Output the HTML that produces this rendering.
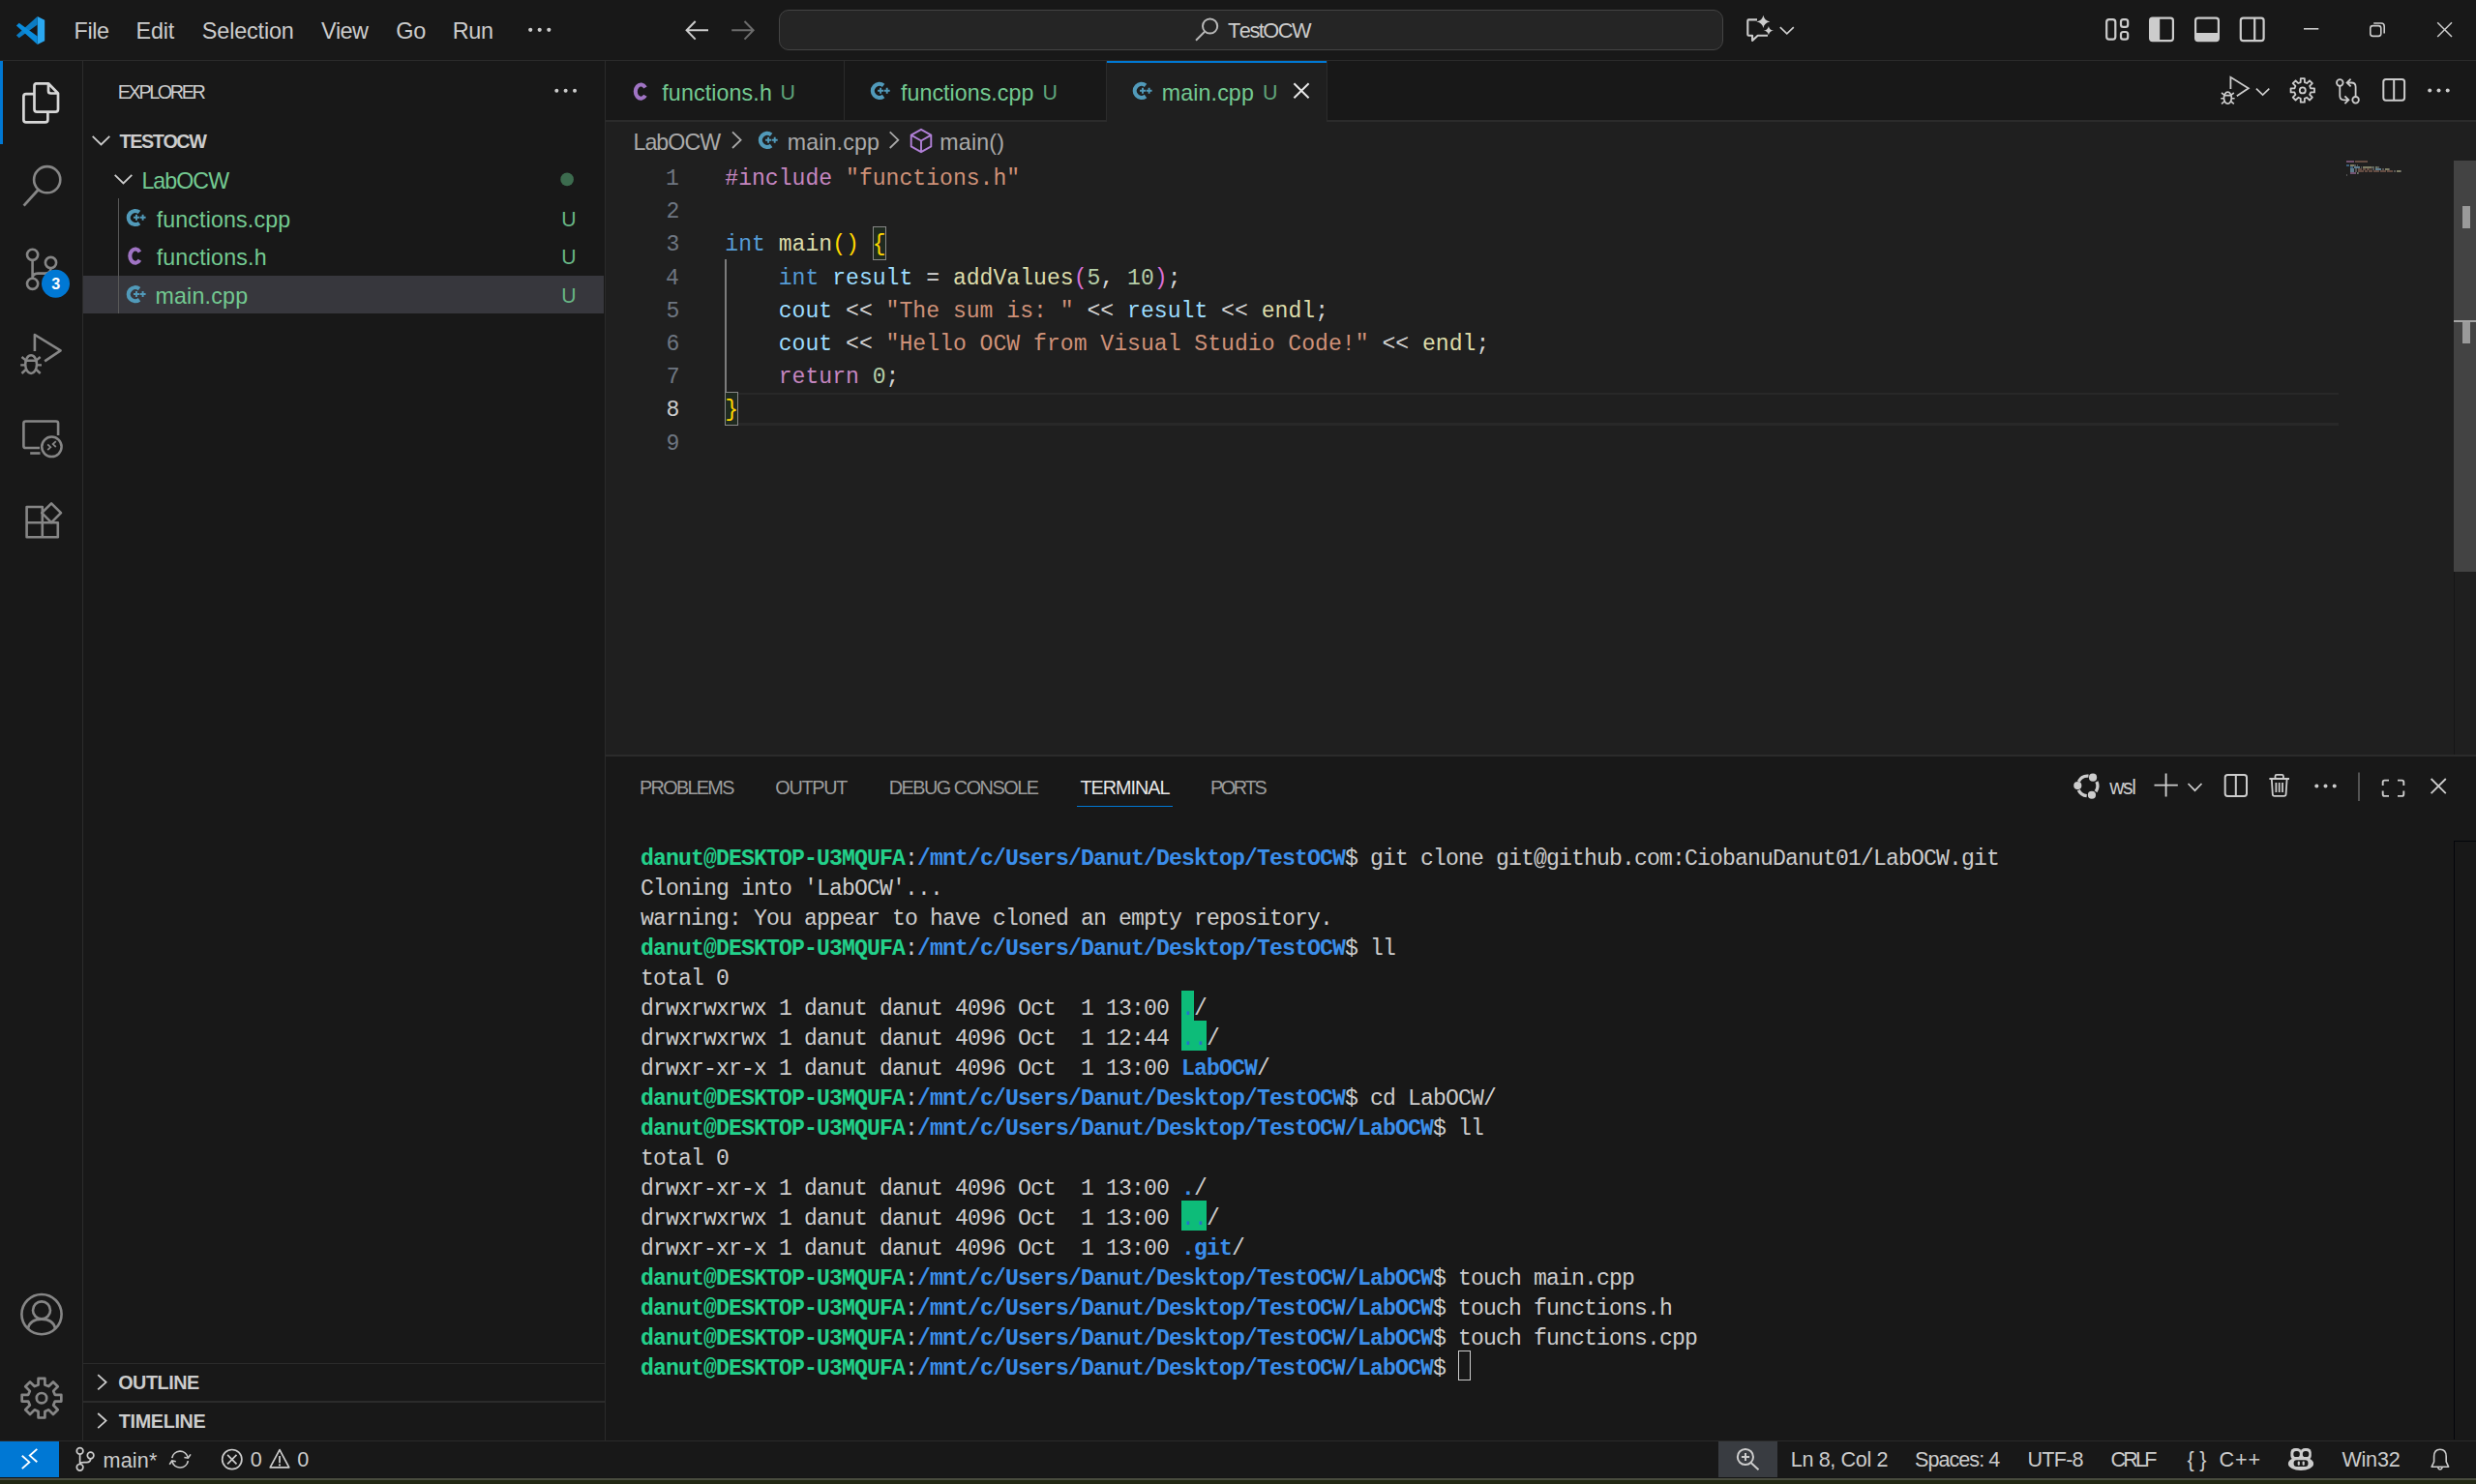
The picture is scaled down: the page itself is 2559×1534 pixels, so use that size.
<!DOCTYPE html>
<html><head><meta charset="utf-8"><title>main.cpp - TestOCW - Visual Studio Code</title>
<style>
html,body{margin:0;padding:0;}
body{width:2559px;height:1534px;background:#181818;overflow:hidden;position:relative;font-family:"Liberation Sans",sans-serif;font-kerning:none;font-variant-ligatures:none;}
.b{position:absolute;}
.t{position:absolute;white-space:pre;line-height:1;z-index:2;}
.m{font-family:"Liberation Mono",monospace;font-size:23.1px;}
.tm{font-family:"Liberation Mono",monospace;font-size:23.1px;letter-spacing:-0.860px;}
svg.ic{position:absolute;left:0;top:0;z-index:1;}
</style></head><body>
<div class="b" style="left:626px;top:63px;width:1933px;height:719px;background:#1f1f1f;"></div>
<div class="b" style="left:626px;top:63px;width:1933px;height:61px;background:#181818;"></div>
<div class="b" style="left:626px;top:124px;width:1933px;height:2px;background:#2b2b2b;"></div>
<div class="b" style="left:872px;top:63px;width:1px;height:61px;background:#2b2b2b;"></div>
<div class="b" style="left:1143px;top:63px;width:1px;height:61px;background:#2b2b2b;"></div>
<div class="b" style="left:1144px;top:63px;width:227px;height:63px;background:#1f1f1f;"></div>
<div class="b" style="left:1144px;top:63px;width:227px;height:2px;background:#0078d4;"></div>
<div class="b" style="left:1371px;top:63px;width:1px;height:61px;background:#2b2b2b;"></div>
<div class="b" style="left:0px;top:61.5px;width:2559px;height:1.5px;background:#2b2b2b;"></div>
<div class="b" style="left:85px;top:63px;width:1.3px;height:1426px;background:#2b2b2b;"></div>
<div class="b" style="left:625px;top:63px;width:1.3px;height:1426px;background:#2b2b2b;"></div>
<div class="b" style="left:0px;top:63px;width:3px;height:86.4px;background:#0078d4;"></div>
<div class="b" style="left:86.3px;top:285px;width:537.7px;height:39px;background:#37373d;"></div>
<div class="b" style="left:121.5px;top:205.2px;width:1.5px;height:118.8px;background:#585858;"></div>
<div class="b" style="left:86.4px;top:1408.6px;width:538.6px;height:1.5px;background:#2b2b2b;"></div>
<div class="b" style="left:86.4px;top:1448.2px;width:538.6px;height:1.5px;background:#2b2b2b;"></div>
<div class="b" style="left:626.4px;top:780.4px;width:1932.6px;height:709px;background:#181818;"></div>
<div class="b" style="left:626.4px;top:780.4px;width:1932.6px;height:1.6px;background:#2b2b2b;"></div>
<div class="b" style="left:1113px;top:832.6px;width:98.8px;height:1.8px;background:#0078d4;"></div>
<div class="b" style="left:0px;top:1488.7px;width:2559px;height:1.3px;background:#2b2b2b;"></div>
<div class="b" style="left:0px;top:1490px;width:2559px;height:38px;background:#181818;"></div>
<div class="b" style="left:0px;top:1490px;width:61.1px;height:38px;background:#0078d4;"></div>
<div class="b" style="left:1776px;top:1490px;width:61px;height:38px;background:#393c41;"></div>
<div class="b" style="left:0px;top:1527px;width:2559px;height:1px;background:#151515;"></div>
<div class="b" style="left:0px;top:1528px;width:2559px;height:2px;background:#484b3e;"></div>
<div class="b" style="left:0px;top:1530px;width:2559px;height:4px;background:#212814;"></div>
<div class="b" style="left:2536px;top:166px;width:23px;height:425px;background:#434343;"></div>
<div class="b" style="left:2536px;top:591px;width:1px;height:189.4px;background:#151517;"></div>
<div class="b" style="left:2545px;top:212.5px;width:8px;height:23px;background:#9a9a9a;"></div>
<div class="b" style="left:2545px;top:333px;width:8px;height:22px;background:#9a9a9a;"></div>
<div class="b" style="left:2536px;top:331px;width:23px;height:2px;background:#a4a4a4;"></div>
<div class="b" style="left:2536px;top:869px;width:23px;height:1px;background:#03050a;"></div>
<div class="b" style="left:2536px;top:869px;width:1px;height:619.4px;background:#03050a;"></div>
<div class="b" style="left:763px;top:405.5px;width:1654px;height:2.3px;background:#282828;"></div>
<div class="b" style="left:763px;top:437px;width:1654px;height:2.6px;background:#282828;"></div>
<div class="b" style="left:749px;top:405px;width:14px;height:35px;background:#1f2a1f;border:1px solid #888;box-sizing:border-box;"></div>
<div class="b" style="left:902px;top:234px;width:14px;height:35px;background:#1f2a1f;border:1px solid #888;box-sizing:border-box;"></div>
<div class="b" style="left:749.2px;top:268.2px;width:1.9px;height:136.8px;background:#7c7c7c;"></div>
<div class="t" style="left:76.58px;top:21.00px;font-size:23.4px;color:#cccccc;letter-spacing:-0.449px;">File</div>
<div class="t" style="left:140.48px;top:21.00px;font-size:23.4px;color:#cccccc;letter-spacing:-0.177px;">Edit</div>
<div class="t" style="left:208.84px;top:21.00px;font-size:23.4px;color:#cccccc;letter-spacing:-0.147px;">Selection</div>
<div class="t" style="left:332.00px;top:21.00px;font-size:23.4px;color:#cccccc;letter-spacing:-0.591px;">View</div>
<div class="t" style="left:409.22px;top:21.00px;font-size:23.4px;color:#cccccc;letter-spacing:-0.056px;">Go</div>
<div class="t" style="left:467.68px;top:21.00px;font-size:23.4px;color:#cccccc;letter-spacing:-0.344px;">Run</div>
<div class="t" style="left:1269.01px;top:21.00px;font-size:21.8px;color:#cccccc;letter-spacing:-1.518px;">TestOCW</div>
<div class="t" style="left:121.78px;top:86.00px;font-size:19.8px;color:#cccccc;letter-spacing:-2.385px;">EXPLORER</div>
<div class="t" style="left:123.48px;top:137.00px;font-size:19.8px;color:#cccccc;font-weight:700;letter-spacing:-1.408px;">TESTOCW</div>
<div class="t" style="left:146.40px;top:176.00px;font-size:23.2px;color:#73c991;letter-spacing:-0.945px;">LabOCW</div>
<div class="t" style="left:161.67px;top:216.00px;font-size:23.2px;color:#73c991;letter-spacing:0.150px;">functions.cpp</div>
<div class="t" style="left:161.67px;top:255.00px;font-size:23.2px;color:#73c991;letter-spacing:0.173px;">functions.h</div>
<div class="t" style="left:160.46px;top:295.00px;font-size:23.2px;color:#73c991;letter-spacing:0.225px;">main.cpp</div>
<div class="t" style="left:580.26px;top:216.00px;font-size:21.2px;color:#68b585;">U</div>
<div class="t" style="left:580.26px;top:255.00px;font-size:21.2px;color:#68b585;">U</div>
<div class="t" style="left:580.26px;top:295.00px;font-size:21.2px;color:#68b585;">U</div>
<div class="t" style="left:122.19px;top:1420.00px;font-size:19.8px;color:#cccccc;font-weight:700;letter-spacing:-0.468px;">OUTLINE</div>
<div class="t" style="left:122.78px;top:1460.00px;font-size:19.8px;color:#cccccc;font-weight:700;letter-spacing:-0.343px;">TIMELINE</div>
<div class="t" style="left:684.27px;top:85.00px;font-size:23.2px;color:#73c991;letter-spacing:0.143px;">functions.h</div>
<div class="t" style="left:806.55px;top:86.00px;font-size:21.4px;color:#5fa37a;">U</div>
<div class="t" style="left:930.97px;top:85.00px;font-size:23.2px;color:#73c991;letter-spacing:0.058px;">functions.cpp</div>
<div class="t" style="left:1077.55px;top:86.00px;font-size:21.4px;color:#5fa37a;">U</div>
<div class="t" style="left:1200.66px;top:85.00px;font-size:23.2px;color:#73c991;letter-spacing:0.154px;">main.cpp</div>
<div class="t" style="left:1304.95px;top:86.00px;font-size:21.4px;color:#5fa37a;">U</div>
<div class="t" style="left:654.40px;top:136.00px;font-size:23.2px;color:#a9a9a9;letter-spacing:-0.905px;">LabOCW</div>
<div class="t" style="left:813.76px;top:136.00px;font-size:23.2px;color:#a9a9a9;letter-spacing:0.154px;">main.cpp</div>
<div class="t" style="left:971.36px;top:136.00px;font-size:23.2px;color:#a9a9a9;letter-spacing:0.168px;">main()</div>
<div class="t m" style="left:749.30px;top:174.00px;color:#c586c0">#include</div><div class="t m" style="left:874.04px;top:174.00px;color:#ce9178">&quot;functions.h&quot;</div>
<div class="t m" style="left:749.30px;top:242.00px;color:#569cd6">int</div><div class="t m" style="left:804.74px;top:242.00px;color:#dcdcaa">main</div><div class="t m" style="left:860.18px;top:242.00px;color:#ffd700">()</div><div class="t m" style="left:901.76px;top:242.00px;color:#ffd700">{</div>
<div class="t m" style="left:804.74px;top:277.00px;color:#569cd6">int</div><div class="t m" style="left:860.18px;top:277.00px;color:#9cdcfe">result</div><div class="t m" style="left:957.20px;top:277.00px;color:#d4d4d4">=</div><div class="t m" style="left:984.92px;top:277.00px;color:#dcdcaa">addValues</div><div class="t m" style="left:1109.66px;top:277.00px;color:#da70d6">(</div><div class="t m" style="left:1123.52px;top:277.00px;color:#b5cea8">5</div><div class="t m" style="left:1137.38px;top:277.00px;color:#d4d4d4">,</div><div class="t m" style="left:1165.10px;top:277.00px;color:#b5cea8">10</div><div class="t m" style="left:1192.82px;top:277.00px;color:#da70d6">)</div><div class="t m" style="left:1206.68px;top:277.00px;color:#d4d4d4">;</div>
<div class="t m" style="left:804.74px;top:311.00px;color:#9cdcfe">cout</div><div class="t m" style="left:874.04px;top:311.00px;color:#d4d4d4">&lt;&lt;</div><div class="t m" style="left:915.62px;top:311.00px;color:#ce9178">&quot;The sum is: &quot;</div><div class="t m" style="left:1123.52px;top:311.00px;color:#d4d4d4">&lt;&lt;</div><div class="t m" style="left:1165.10px;top:311.00px;color:#9cdcfe">result</div><div class="t m" style="left:1262.12px;top:311.00px;color:#d4d4d4">&lt;&lt;</div><div class="t m" style="left:1303.70px;top:311.00px;color:#dcdcaa">endl</div><div class="t m" style="left:1359.14px;top:311.00px;color:#d4d4d4">;</div>
<div class="t m" style="left:804.74px;top:345.00px;color:#9cdcfe">cout</div><div class="t m" style="left:874.04px;top:345.00px;color:#d4d4d4">&lt;&lt;</div><div class="t m" style="left:915.62px;top:345.00px;color:#ce9178">&quot;Hello OCW from Visual Studio Code!&quot;</div><div class="t m" style="left:1428.44px;top:345.00px;color:#d4d4d4">&lt;&lt;</div><div class="t m" style="left:1470.02px;top:345.00px;color:#dcdcaa">endl</div><div class="t m" style="left:1525.46px;top:345.00px;color:#d4d4d4">;</div>
<div class="t m" style="left:804.74px;top:379.00px;color:#c586c0">return</div><div class="t m" style="left:901.76px;top:379.00px;color:#b5cea8">0</div><div class="t m" style="left:915.62px;top:379.00px;color:#d4d4d4">;</div>
<div class="t m" style="left:749.30px;top:413.00px;color:#ffd700">}</div>
<div class="b" style="left:2424.90px;top:165.90px;width:8.08px;height:1.9px;background:#c586c0;opacity:0.5"></div>
<div class="b" style="left:2433.99px;top:165.90px;width:13.13px;height:1.9px;background:#ce9178;opacity:0.4"></div>
<div class="b" style="left:2424.90px;top:169.90px;width:3.03px;height:1.9px;background:#569cd6;opacity:0.5"></div>
<div class="b" style="left:2428.94px;top:169.90px;width:4.04px;height:1.9px;background:#dcdcaa;opacity:0.5"></div>
<div class="b" style="left:2432.98px;top:169.90px;width:2.02px;height:1.9px;background:#d4d4d4;opacity:0.3"></div>
<div class="b" style="left:2436.01px;top:169.90px;width:1.01px;height:1.9px;background:#d4d4d4;opacity:0.3"></div>
<div class="b" style="left:2428.94px;top:171.90px;width:3.03px;height:1.9px;background:#569cd6;opacity:0.5"></div>
<div class="b" style="left:2432.98px;top:171.90px;width:6.06px;height:1.9px;background:#9cdcfe;opacity:0.5"></div>
<div class="b" style="left:2440.05px;top:171.90px;width:1.01px;height:1.9px;background:#d4d4d4;opacity:0.3"></div>
<div class="b" style="left:2442.07px;top:171.90px;width:9.09px;height:1.9px;background:#dcdcaa;opacity:0.5"></div>
<div class="b" style="left:2451.16px;top:171.90px;width:1.01px;height:1.9px;background:#d4d4d4;opacity:0.3"></div>
<div class="b" style="left:2452.17px;top:171.90px;width:1.01px;height:1.9px;background:#b5cea8;opacity:0.5"></div>
<div class="b" style="left:2453.18px;top:171.90px;width:1.01px;height:1.9px;background:#d4d4d4;opacity:0.3"></div>
<div class="b" style="left:2455.20px;top:171.90px;width:2.02px;height:1.9px;background:#b5cea8;opacity:0.5"></div>
<div class="b" style="left:2457.22px;top:171.90px;width:1.01px;height:1.9px;background:#d4d4d4;opacity:0.3"></div>
<div class="b" style="left:2458.23px;top:171.90px;width:1.01px;height:1.9px;background:#d4d4d4;opacity:0.3"></div>
<div class="b" style="left:2428.94px;top:173.90px;width:4.04px;height:1.9px;background:#9cdcfe;opacity:0.5"></div>
<div class="b" style="left:2433.99px;top:173.90px;width:2.02px;height:1.9px;background:#d4d4d4;opacity:0.3"></div>
<div class="b" style="left:2437.02px;top:173.90px;width:4.04px;height:1.9px;background:#ce9178;opacity:0.4"></div>
<div class="b" style="left:2442.07px;top:173.90px;width:3.03px;height:1.9px;background:#ce9178;opacity:0.4"></div>
<div class="b" style="left:2446.11px;top:173.90px;width:3.03px;height:1.9px;background:#ce9178;opacity:0.4"></div>
<div class="b" style="left:2450.15px;top:173.90px;width:1.01px;height:1.9px;background:#ce9178;opacity:0.4"></div>
<div class="b" style="left:2452.17px;top:173.90px;width:2.02px;height:1.9px;background:#d4d4d4;opacity:0.3"></div>
<div class="b" style="left:2455.20px;top:173.90px;width:6.06px;height:1.9px;background:#9cdcfe;opacity:0.5"></div>
<div class="b" style="left:2462.27px;top:173.90px;width:2.02px;height:1.9px;background:#d4d4d4;opacity:0.3"></div>
<div class="b" style="left:2465.30px;top:173.90px;width:4.04px;height:1.9px;background:#dcdcaa;opacity:0.5"></div>
<div class="b" style="left:2469.34px;top:173.90px;width:1.01px;height:1.9px;background:#d4d4d4;opacity:0.3"></div>
<div class="b" style="left:2428.94px;top:175.90px;width:4.04px;height:1.9px;background:#9cdcfe;opacity:0.5"></div>
<div class="b" style="left:2433.99px;top:175.90px;width:2.02px;height:1.9px;background:#d4d4d4;opacity:0.3"></div>
<div class="b" style="left:2437.02px;top:175.90px;width:6.06px;height:1.9px;background:#ce9178;opacity:0.4"></div>
<div class="b" style="left:2444.09px;top:175.90px;width:3.03px;height:1.9px;background:#ce9178;opacity:0.4"></div>
<div class="b" style="left:2448.13px;top:175.90px;width:4.04px;height:1.9px;background:#ce9178;opacity:0.4"></div>
<div class="b" style="left:2453.18px;top:175.90px;width:6.06px;height:1.9px;background:#ce9178;opacity:0.4"></div>
<div class="b" style="left:2460.25px;top:175.90px;width:6.06px;height:1.9px;background:#ce9178;opacity:0.4"></div>
<div class="b" style="left:2467.32px;top:175.90px;width:6.06px;height:1.9px;background:#ce9178;opacity:0.4"></div>
<div class="b" style="left:2474.39px;top:175.90px;width:2.02px;height:1.9px;background:#d4d4d4;opacity:0.3"></div>
<div class="b" style="left:2477.42px;top:175.90px;width:4.04px;height:1.9px;background:#dcdcaa;opacity:0.5"></div>
<div class="b" style="left:2481.46px;top:175.90px;width:1.01px;height:1.9px;background:#d4d4d4;opacity:0.3"></div>
<div class="b" style="left:2428.94px;top:177.90px;width:6.06px;height:1.9px;background:#c586c0;opacity:0.5"></div>
<div class="b" style="left:2436.01px;top:177.90px;width:1.01px;height:1.9px;background:#b5cea8;opacity:0.5"></div>
<div class="b" style="left:2437.02px;top:177.90px;width:1.01px;height:1.9px;background:#d4d4d4;opacity:0.3"></div>
<div class="b" style="left:2424.90px;top:179.90px;width:1.01px;height:1.9px;background:#d4d4d4;opacity:0.3"></div>
<div class="t m" style="left:688.05px;top:174.00px;color:#6e7681">1</div>
<div class="t m" style="left:688.57px;top:208.00px;color:#6e7681">2</div>
<div class="t m" style="left:688.40px;top:242.00px;color:#6e7681">3</div>
<div class="t m" style="left:688.11px;top:277.00px;color:#6e7681">4</div>
<div class="t m" style="left:688.40px;top:311.00px;color:#6e7681">5</div>
<div class="t m" style="left:688.44px;top:345.00px;color:#6e7681">6</div>
<div class="t m" style="left:688.74px;top:379.00px;color:#6e7681">7</div>
<div class="t m" style="left:688.46px;top:413.00px;color:#cccccc">8</div>
<div class="t m" style="left:688.54px;top:448.00px;color:#6e7681">9</div>
<div class="t" style="left:660.98px;top:805.00px;font-size:19.8px;color:#9d9d9d;letter-spacing:-1.643px;">PROBLEMS</div>
<div class="t" style="left:801.36px;top:805.00px;font-size:19.8px;color:#9d9d9d;letter-spacing:-1.280px;">OUTPUT</div>
<div class="t" style="left:918.68px;top:805.00px;font-size:19.8px;color:#9d9d9d;letter-spacing:-1.447px;">DEBUG CONSOLE</div>
<div class="t" style="left:1116.46px;top:805.00px;font-size:19.8px;color:#e7e7e7;letter-spacing:-1.001px;">TERMINAL</div>
<div class="t" style="left:1250.98px;top:805.00px;font-size:19.8px;color:#9d9d9d;letter-spacing:-2.369px;">PORTS</div>
<div class="t" style="left:2180.33px;top:803.00px;font-size:21.2px;color:#cccccc;letter-spacing:-1.516px;">wsl</div>
<div class="t tm" style="left:662.00px;top:877.00px;color:#23d18b;font-weight:700;">danut@DESKTOP-U3MQUFA</div><div class="t tm" style="left:935.00px;top:877.00px;color:#cccccc;">:</div><div class="t tm" style="left:948.00px;top:877.00px;color:#3b8eea;font-weight:700;">/mnt/c/Users/Danut/Desktop/TestOCW</div><div class="t tm" style="left:1390.00px;top:877.00px;color:#cccccc;">$ git clone git@github.com:CiobanuDanut01/LabOCW.git</div>
<div class="t tm" style="left:662.00px;top:908.00px;color:#cccccc;">Cloning into &#x27;LabOCW&#x27;...</div>
<div class="t tm" style="left:662.00px;top:939.00px;color:#cccccc;">warning: You appear to have cloned an empty repository.</div>
<div class="t tm" style="left:662.00px;top:970.00px;color:#23d18b;font-weight:700;">danut@DESKTOP-U3MQUFA</div><div class="t tm" style="left:935.00px;top:970.00px;color:#cccccc;">:</div><div class="t tm" style="left:948.00px;top:970.00px;color:#3b8eea;font-weight:700;">/mnt/c/Users/Danut/Desktop/TestOCW</div><div class="t tm" style="left:1390.00px;top:970.00px;color:#cccccc;">$ ll</div>
<div class="t tm" style="left:662.00px;top:1001.00px;color:#cccccc;">total 0</div>
<div class="t tm" style="left:662.00px;top:1032.00px;color:#cccccc;">drwxrwxrwx 1 danut danut 4096 Oct  1 13:00 </div><div class="b" style="left:1221.00px;top:1024px;width:13.00px;height:31px;background:#0dbc79"></div><div class="t tm" style="left:1221.00px;top:1032.00px;color:#2472c8;">.</div><div class="t tm" style="left:1234.00px;top:1032.00px;color:#cccccc;">/</div>
<div class="t tm" style="left:662.00px;top:1063.00px;color:#cccccc;">drwxrwxrwx 1 danut danut 4096 Oct  1 12:44 </div><div class="b" style="left:1221.00px;top:1055px;width:26.00px;height:31px;background:#0dbc79"></div><div class="t tm" style="left:1221.00px;top:1063.00px;color:#2472c8;">..</div><div class="t tm" style="left:1247.00px;top:1063.00px;color:#cccccc;">/</div>
<div class="t tm" style="left:662.00px;top:1094.00px;color:#cccccc;">drwxr-xr-x 1 danut danut 4096 Oct  1 13:00 </div><div class="t tm" style="left:1221.00px;top:1094.00px;color:#3b8eea;font-weight:700;">LabOCW</div><div class="t tm" style="left:1299.00px;top:1094.00px;color:#cccccc;">/</div>
<div class="t tm" style="left:662.00px;top:1125.00px;color:#23d18b;font-weight:700;">danut@DESKTOP-U3MQUFA</div><div class="t tm" style="left:935.00px;top:1125.00px;color:#cccccc;">:</div><div class="t tm" style="left:948.00px;top:1125.00px;color:#3b8eea;font-weight:700;">/mnt/c/Users/Danut/Desktop/TestOCW</div><div class="t tm" style="left:1390.00px;top:1125.00px;color:#cccccc;">$ cd LabOCW/</div>
<div class="t tm" style="left:662.00px;top:1156.00px;color:#23d18b;font-weight:700;">danut@DESKTOP-U3MQUFA</div><div class="t tm" style="left:935.00px;top:1156.00px;color:#cccccc;">:</div><div class="t tm" style="left:948.00px;top:1156.00px;color:#3b8eea;font-weight:700;">/mnt/c/Users/Danut/Desktop/TestOCW/LabOCW</div><div class="t tm" style="left:1481.00px;top:1156.00px;color:#cccccc;">$ ll</div>
<div class="t tm" style="left:662.00px;top:1187.00px;color:#cccccc;">total 0</div>
<div class="t tm" style="left:662.00px;top:1218.00px;color:#cccccc;">drwxr-xr-x 1 danut danut 4096 Oct  1 13:00 </div><div class="t tm" style="left:1221.00px;top:1218.00px;color:#3b8eea;font-weight:700;">.</div><div class="t tm" style="left:1234.00px;top:1218.00px;color:#cccccc;">/</div>
<div class="t tm" style="left:662.00px;top:1249.00px;color:#cccccc;">drwxrwxrwx 1 danut danut 4096 Oct  1 13:00 </div><div class="b" style="left:1221.00px;top:1241px;width:26.00px;height:31px;background:#0dbc79"></div><div class="t tm" style="left:1221.00px;top:1249.00px;color:#2472c8;">..</div><div class="t tm" style="left:1247.00px;top:1249.00px;color:#cccccc;">/</div>
<div class="t tm" style="left:662.00px;top:1280.00px;color:#cccccc;">drwxr-xr-x 1 danut danut 4096 Oct  1 13:00 </div><div class="t tm" style="left:1221.00px;top:1280.00px;color:#3b8eea;font-weight:700;">.git</div><div class="t tm" style="left:1273.00px;top:1280.00px;color:#cccccc;">/</div>
<div class="t tm" style="left:662.00px;top:1311.00px;color:#23d18b;font-weight:700;">danut@DESKTOP-U3MQUFA</div><div class="t tm" style="left:935.00px;top:1311.00px;color:#cccccc;">:</div><div class="t tm" style="left:948.00px;top:1311.00px;color:#3b8eea;font-weight:700;">/mnt/c/Users/Danut/Desktop/TestOCW/LabOCW</div><div class="t tm" style="left:1481.00px;top:1311.00px;color:#cccccc;">$ touch main.cpp</div>
<div class="t tm" style="left:662.00px;top:1342.00px;color:#23d18b;font-weight:700;">danut@DESKTOP-U3MQUFA</div><div class="t tm" style="left:935.00px;top:1342.00px;color:#cccccc;">:</div><div class="t tm" style="left:948.00px;top:1342.00px;color:#3b8eea;font-weight:700;">/mnt/c/Users/Danut/Desktop/TestOCW/LabOCW</div><div class="t tm" style="left:1481.00px;top:1342.00px;color:#cccccc;">$ touch functions.h</div>
<div class="t tm" style="left:662.00px;top:1373.00px;color:#23d18b;font-weight:700;">danut@DESKTOP-U3MQUFA</div><div class="t tm" style="left:935.00px;top:1373.00px;color:#cccccc;">:</div><div class="t tm" style="left:948.00px;top:1373.00px;color:#3b8eea;font-weight:700;">/mnt/c/Users/Danut/Desktop/TestOCW/LabOCW</div><div class="t tm" style="left:1481.00px;top:1373.00px;color:#cccccc;">$ touch functions.cpp</div>
<div class="t tm" style="left:662.00px;top:1404.00px;color:#23d18b;font-weight:700;">danut@DESKTOP-U3MQUFA</div><div class="t tm" style="left:935.00px;top:1404.00px;color:#cccccc;">:</div><div class="t tm" style="left:948.00px;top:1404.00px;color:#3b8eea;font-weight:700;">/mnt/c/Users/Danut/Desktop/TestOCW/LabOCW</div><div class="t tm" style="left:1481.00px;top:1404.00px;color:#cccccc;">$ </div>
<div class="b" style="left:1507.0px;top:1396px;width:13.0px;height:31px;background:transparent;border:1.5px solid #cccccc;box-sizing:border-box;"></div>
<div class="t" style="left:53.33px;top:285.00px;font-size:16.2px;color:#ffffff;font-weight:700;">3</div>
<div class="t" style="left:106.57px;top:1499.00px;font-size:21.6px;color:#cccccc;letter-spacing:0.137px;">main*</div>
<div class="t" style="left:258.66px;top:1498.00px;font-size:21.6px;color:#cccccc;">0</div>
<div class="t" style="left:307.36px;top:1498.00px;font-size:21.6px;color:#cccccc;">0</div>
<div class="t" style="left:1850.83px;top:1498.00px;font-size:21.6px;color:#cccccc;letter-spacing:-0.381px;">Ln 8, Col 2</div>
<div class="t" style="left:1979.02px;top:1498.00px;font-size:21.6px;color:#cccccc;letter-spacing:-0.981px;">Spaces: 4</div>
<div class="t" style="left:2095.53px;top:1498.00px;font-size:21.6px;color:#cccccc;letter-spacing:-0.772px;">UTF-8</div>
<div class="t" style="left:2181.60px;top:1498.00px;font-size:21.6px;color:#cccccc;letter-spacing:-2.881px;">CRLF</div>
<div class="t" style="left:2260.44px;top:1498.00px;font-size:21.6px;color:#cccccc;letter-spacing:5.721px;">{}</div>
<div class="t" style="left:2293.60px;top:1498.00px;font-size:21.6px;color:#cccccc;letter-spacing:0.818px;">C++</div>
<div class="t" style="left:2420.41px;top:1498.00px;font-size:21.6px;color:#cccccc;letter-spacing:-0.236px;">Win32</div>
<svg class="ic" width="2559" height="1534" viewBox="0 0 2559 1534" fill="none" stroke-linecap="butt">
<polygon points="38.7,17 46.2,20.8 46.2,42.2 38.7,46" fill="#2aa7f0"/>
<polygon points="38.7,17 38.7,25.4 19.7,39.2 16.9,36.6" fill="#0b7cc4"/>
<polygon points="19.7,23.8 16.9,26.4 38.7,46 38.7,37.6" fill="#0a8cdc"/>
<circle cx="548.2" cy="30.8" r="2.1" fill="#cccccc"/>
<circle cx="557.7" cy="30.8" r="2.1" fill="#cccccc"/>
<circle cx="567.3" cy="30.8" r="2.1" fill="#cccccc"/>
<path d="M732,31.3 H710 M718.7,22 L709.6,31.3 L718.7,40.6" stroke="#cccccc" stroke-width="2" fill="none" />
<path d="M756.2,31.3 H778.2 M769.5,22 L778.6,31.3 L769.5,40.6" stroke="#6b6b6b" stroke-width="2" fill="none" />
<rect x="805.5" y="10.5" width="975" height="41" rx="9.5" stroke="#444444" stroke-width="1" fill="#252525"/>
<circle cx="1250.6" cy="27" r="7.6" stroke="#b8b8b8" stroke-width="2" fill="none"/>
<path d="M1245,32.8 L1236,41.8" stroke="#b8b8b8" stroke-width="2" fill="none" />
<path d="M1816,20.4 H1807.3 Q1806.3,20.4 1806.3,21.4 V35.8 Q1806.3,36.8 1807.3,36.8 H1811.1 V42 L1816.7,36.8 H1827" stroke="#cccccc" stroke-width="2.1" fill="none" stroke-linejoin="round"/>
<path d="M1822.4,15.799999999999999 Q1823.4350000000002,21.41 1829.3000000000002,22.4 Q1823.4350000000002,23.389999999999997 1822.4,29.0 Q1821.365,23.389999999999997 1815.5,22.4 Q1821.365,21.41 1822.4,15.799999999999999 Z" stroke="none" stroke-width="0" fill="#cccccc" />
<path d="M1827.9,26.900000000000002 Q1828.68,30.895000000000003 1833.1000000000001,31.6 Q1828.68,32.305 1827.9,36.300000000000004 Q1827.1200000000001,32.305 1822.7,31.6 Q1827.1200000000001,30.895000000000003 1827.9,26.900000000000002 Z" stroke="none" stroke-width="0" fill="#cccccc" />
<path d="M1839.8,28.2 L1846.8,34.8 L1853.8,28.2" stroke="#cccccc" stroke-width="1.7" fill="none" />
<rect x="2177.2" y="20.2" width="9.1" height="20.5" rx="2.6" stroke="#cccccc" stroke-width="2.2" fill="none"/>
<rect x="2192" y="20.2" width="7.2" height="7.6" rx="2.4" stroke="#cccccc" stroke-width="2.2" fill="none"/>
<rect x="2192" y="33" width="7.2" height="7.7" rx="2.4" stroke="#cccccc" stroke-width="2.2" fill="none"/>
<rect x="2222.1" y="18.7" width="23.8" height="23.5" rx="2.6" stroke="#cccccc" stroke-width="2.2" fill="none"/>
<path d="M2222.1,21.3 Q2222.1,18.7 2224.7,18.7 H2232.2 V42.2 H2224.7 Q2222.1,42.2 2222.1,39.6 Z" fill="#cccccc"/>
<rect x="2269.1" y="18.7" width="23.8" height="23.5" rx="2.6" stroke="#cccccc" stroke-width="2.2" fill="none"/>
<path d="M2269.1,33.9 H2292.9 V39.6 Q2292.9,42.2 2290.3,42.2 H2271.7 Q2269.1,42.2 2269.1,39.6 Z" fill="#cccccc"/>
<rect x="2315.8" y="18.7" width="23.8" height="23.5" rx="2.6" stroke="#cccccc" stroke-width="2.2" fill="none"/>
<path d="M2330.2,18.7 V42.2" stroke="#cccccc" stroke-width="2.2" fill="none" />
<path d="M2381,29.8 H2396.3" stroke="#cccccc" stroke-width="1.6" fill="none" />
<rect x="2449.8" y="26.6" width="11" height="10.8" rx="2.6" stroke="#cccccc" stroke-width="1.6" fill="none"/>
<path d="M2453.2,24 H2461 Q2464.2,24 2464.2,27.2 V34.6" stroke="#cccccc" stroke-width="1.6" fill="none" />
<path d="M2519.2,23.3 L2534,38 M2534,23.3 L2519.2,38" stroke="#cccccc" stroke-width="1.5" fill="none" />
<path d="M36.5,86.3 H50 L60,96.5 V113 Q60,115.7 57.3,115.7 H38.2 Q35.5,115.7 35.5,113 V88.5 Q35.5,86.3 37.7,86.3 M50,86.3 V94 Q50,96.5 52.5,96.5 H60" stroke="#d7d7d7" stroke-width="2.7" fill="none" stroke-linejoin="round"/>
<path d="M35.5,97.2 H27 Q24.4,97.2 24.4,99.8 V123.8 Q24.4,126.4 27,126.4 H46.8 Q49.4,126.4 49.4,123.8 V115.7" stroke="#d7d7d7" stroke-width="2.7" fill="none" />
<circle cx="48.7" cy="185.7" r="13.6" stroke="#868686" stroke-width="2.6" fill="none"/>
<path d="M39.4,196.3 L24.6,212.6" stroke="#868686" stroke-width="2.8" fill="none" />
<circle cx="33.6" cy="263.3" r="5.6" stroke="#868686" stroke-width="2.6" fill="none"/>
<circle cx="52.5" cy="271.5" r="5.6" stroke="#868686" stroke-width="2.6" fill="none"/>
<circle cx="33.6" cy="293.3" r="5.6" stroke="#868686" stroke-width="2.6" fill="none"/>
<path d="M33.6,269 V287.6 M52.5,277.2 Q52.5,282.6 46.5,282.6 H39 Q33.6,282.6 33.6,287.5" stroke="#868686" stroke-width="2.6" fill="none" />
<circle cx="57.5" cy="293.3" r="14.5" fill="#0078d4"/>
<path d="M35.9,363 V346 L62.6,362.4 L46.2,373.4" stroke="#868686" stroke-width="2.6" fill="none" stroke-linejoin="round"/>
<ellipse cx="32.1" cy="376.6" rx="5.9" ry="9.3" stroke="#868686" stroke-width="2.5" fill="none"/>
<path d="M26.4,372.8 H37.8 M21.2,377.4 H26.2 M38,377.4 H43 M22.5,369 L26.6,372.4 M41.7,369 L37.6,372.4 M22.5,386 L26.8,382 M41.7,386 L37.4,382" stroke="#868686" stroke-width="2.4" fill="none" />
<path d="M41,463 H26.5 Q24.4,463 24.4,460.9 V437.6 Q24.4,435.5 26.5,435.5 H58 Q60.1,435.5 60.1,437.6 V450" stroke="#868686" stroke-width="2.6" fill="none" />
<path d="M31.2,468.5 H41.5" stroke="#868686" stroke-width="2.6" fill="none" />
<circle cx="53.4" cy="461.8" r="10.2" stroke="#868686" stroke-width="2.5" fill="none"/>
<path d="M49.2,459.3 L52.3,462.2 L49.2,465.1 M57.8,456.2 L54.7,459.1 L57.8,462" stroke="#868686" stroke-width="1.8" fill="none" />
<path d="M43.8,540.2 V524 H27.6 V555.2 H59.8 V540.2 H27.6 M43.8,540.2 V555.2" stroke="#868686" stroke-width="2.6" fill="none" stroke-linejoin="round"/>
<path d="M53.1,520.3 L63,530.2 L53.1,540.1 L43.2,530.2 Z" stroke="#868686" stroke-width="2.6" fill="none" stroke-linejoin="round"/>
<circle cx="43" cy="1358.6" r="20.6" stroke="#868686" stroke-width="2.6" fill="none"/>
<circle cx="43" cy="1354.4" r="9" stroke="#868686" stroke-width="2.6" fill="none"/>
<path d="M28.8,1373.4 Q31,1363.6 43,1363.6 Q55,1363.6 57.2,1373.4" stroke="#868686" stroke-width="2.6" fill="none" />
<path d="M39.58,1431.42 L39.62,1424.88 L46.38,1424.88 L46.42,1431.42 L50.32,1433.03 L54.98,1428.44 L59.76,1433.22 L55.17,1437.88 L56.78,1441.78 L63.32,1441.82 L63.32,1448.58 L56.78,1448.62 L55.17,1452.52 L59.76,1457.18 L54.98,1461.96 L50.32,1457.37 L46.42,1458.98 L46.38,1465.52 L39.62,1465.52 L39.58,1458.98 L35.68,1457.37 L31.02,1461.96 L26.24,1457.18 L30.83,1452.52 L29.22,1448.62 L22.68,1448.58 L22.68,1441.82 L29.22,1441.78 L30.83,1437.88 L26.24,1433.22 L31.02,1428.44 L35.68,1433.03 Z" stroke="#868686" stroke-width="2.7" fill="none" stroke-linejoin="round"/>
<circle cx="43" cy="1445.2" r="5.2" stroke="#868686" stroke-width="2.7" fill="none"/>
<path d="M95.7,140.8 L104.5,149.5 L113.3,140.8" stroke="#cccccc" stroke-width="1.8" fill="none" />
<path d="M118.7,180.8 L127.5,189.4 L136.3,180.8" stroke="#cccccc" stroke-width="1.8" fill="none" />
<path d="M101.2,1421.2 L109.6,1428.8 L101.2,1436.4" stroke="#cccccc" stroke-width="1.8" fill="none" />
<path d="M101.2,1461 L109.6,1468.6 L101.2,1476.2" stroke="#cccccc" stroke-width="1.8" fill="none" />
<circle cx="575.3" cy="93.8" r="2.0" fill="#cccccc"/>
<circle cx="584.6" cy="93.8" r="2.0" fill="#cccccc"/>
<circle cx="594" cy="93.8" r="2.0" fill="#cccccc"/>
<circle cx="586.1" cy="185.4" r="6.8" fill="#3c6b4e"/>
<path d="M144.01,219.41 A7.0,7.0 0 1 0 144.01,230.59" stroke="#519aba" stroke-width="4.2" fill="none" />
<path d="M138.0,224.8 H144.0 M141.0,221.8 V227.8" stroke="#519aba" stroke-width="1.9" fill="none" />
<path d="M144.6,224.8 H150.6 M147.6,221.8 V227.8" stroke="#519aba" stroke-width="1.9" fill="none" />
<path d="M144.01,298.61 A7.0,7.0 0 1 0 144.01,309.79" stroke="#519aba" stroke-width="4.2" fill="none" />
<path d="M138.0,304.0 H144.0 M141.0,301.0 V307.0" stroke="#519aba" stroke-width="1.9" fill="none" />
<path d="M144.6,304.0 H150.6 M147.6,301.0 V307.0" stroke="#519aba" stroke-width="1.9" fill="none" />
<path d="M144.43,260.43 A5.6,7.1 0 1 0 144.43,268.77" stroke="#a074c4" stroke-width="4.1" fill="none" />
<path d="M913.11,88.31 A7.0,7.0 0 1 0 913.11,99.49" stroke="#519aba" stroke-width="4.2" fill="none" />
<path d="M907.0999999999999,93.7 H913.0999999999999 M910.0999999999999,90.7 V96.7" stroke="#519aba" stroke-width="1.9" fill="none" />
<path d="M913.6999999999999,93.7 H919.6999999999999 M916.6999999999999,90.7 V96.7" stroke="#519aba" stroke-width="1.9" fill="none" />
<path d="M1184.01,88.31 A7.0,7.0 0 1 0 1184.01,99.49" stroke="#519aba" stroke-width="4.2" fill="none" />
<path d="M1178.0,93.7 H1184.0 M1181.0,90.7 V96.7" stroke="#519aba" stroke-width="1.9" fill="none" />
<path d="M1184.6000000000001,93.7 H1190.6000000000001 M1187.6000000000001,90.7 V96.7" stroke="#519aba" stroke-width="1.9" fill="none" />
<path d="M666.93,90.43 A5.6,7.1 0 1 0 666.93,98.77" stroke="#a074c4" stroke-width="4.1" fill="none" />
<path d="M797.11,139.31 A7.0,7.0 0 1 0 797.11,150.49" stroke="#519aba" stroke-width="4.2" fill="none" />
<path d="M791.0999999999999,144.70000000000002 H797.0999999999999 M794.0999999999999,141.70000000000002 V147.70000000000002" stroke="#519aba" stroke-width="1.9" fill="none" />
<path d="M797.6999999999999,144.70000000000002 H803.6999999999999 M800.6999999999999,141.70000000000002 V147.70000000000002" stroke="#519aba" stroke-width="1.9" fill="none" />
<path d="M1337.4,86.3 L1352.6,101.2 M1352.6,86.3 L1337.4,101.2" stroke="#e8e8e8" stroke-width="2" fill="none" />
<path d="M757,136.4 L765.6,144.7 L757,153" stroke="#a9a9a9" stroke-width="1.8" fill="none" />
<path d="M919.7,136.4 L928.3,144.7 L919.7,153" stroke="#a9a9a9" stroke-width="1.8" fill="none" />
<path d="M952,133.8 L962.3,139.6 V151.4 L952,157.2 L941.7,151.4 V139.6 Z M941.7,139.6 L952,145.5 L962.3,139.6 M952,145.5 V157.2" stroke="#b180d7" stroke-width="1.9" fill="none" stroke-linejoin="round"/>
<path d="M2305.4,92 V79.8 L2323.8,91.3 L2311.8,99.2" stroke="#cccccc" stroke-width="1.8" fill="none" />
<ellipse cx="2302.4" cy="101.2" rx="3.9" ry="6" stroke="#cccccc" stroke-width="1.7" fill="none"/>
<path d="M2298.6,98.6 H2306.2 M2295.3,101.8 H2298.4 M2306.4,101.8 H2309.6 M2296,96 L2298.8,98.2 M2308.8,96 L2306,98.2 M2296,107.4 L2298.9,104.8 M2308.8,107.4 L2305.9,104.8" stroke="#cccccc" stroke-width="1.6" fill="none" />
<path d="M2331.9,91.6 L2338.6,98 L2345.3,91.6" stroke="#cccccc" stroke-width="1.7" fill="none" />
<path d="M2377.73,85.05 L2377.76,81.17 L2381.84,81.17 L2381.87,85.05 L2384.24,86.03 L2387.01,83.31 L2389.89,86.19 L2387.17,88.96 L2388.15,91.33 L2392.03,91.36 L2392.03,95.44 L2388.15,95.47 L2387.17,97.84 L2389.89,100.61 L2387.01,103.49 L2384.24,100.77 L2381.87,101.75 L2381.84,105.63 L2377.76,105.63 L2377.73,101.75 L2375.36,100.77 L2372.59,103.49 L2369.71,100.61 L2372.43,97.84 L2371.45,95.47 L2367.57,95.44 L2367.57,91.36 L2371.45,91.33 L2372.43,88.96 L2369.71,86.19 L2372.59,83.31 L2375.36,86.03 Z" stroke="#cccccc" stroke-width="1.8" fill="none" stroke-linejoin="round"/>
<circle cx="2379.8" cy="93.4" r="3.0" stroke="#cccccc" stroke-width="1.8" fill="none"/>
<circle cx="2418.3" cy="85.5" r="3.3" stroke="#cccccc" stroke-width="1.8" fill="none"/>
<circle cx="2434.6" cy="103.3" r="3.3" stroke="#cccccc" stroke-width="1.8" fill="none"/>
<path d="M2418.3,89 V99 Q2418.3,103.3 2422.6,103.3 H2427 M2423.4,99.4 L2427.4,103.3 L2423.4,107.2" stroke="#cccccc" stroke-width="1.8" fill="none" />
<path d="M2434.6,99.8 V89.8 Q2434.6,85.5 2430.3,85.5 H2426 M2429.6,81.6 L2425.6,85.5 L2429.6,89.4" stroke="#cccccc" stroke-width="1.8" fill="none" />
<rect x="2463.3" y="81.9" width="21.8" height="21.8" rx="2.6" stroke="#cccccc" stroke-width="2" fill="none"/>
<path d="M2474.2,81.9 V103.7" stroke="#cccccc" stroke-width="2" fill="none" />
<circle cx="2511.2" cy="93.4" r="2.0" fill="#cccccc"/>
<circle cx="2520.5" cy="93.4" r="2.0" fill="#cccccc"/>
<circle cx="2529.7" cy="93.4" r="2.0" fill="#cccccc"/>
<path d="M2166.93,808.05 A10.3,10.3 0 0 1 2166.04,818.31" stroke="#cccccc" stroke-width="3.3" fill="none" />
<path d="M2156.70,822.66 A10.3,10.3 0 0 1 2148.27,816.75" stroke="#cccccc" stroke-width="3.3" fill="none" />
<path d="M2148.27,808.05 A10.3,10.3 0 0 1 2158.50,802.14" stroke="#cccccc" stroke-width="3.3" fill="none" />
<circle cx="2163.06" cy="803.67" r="4.1" fill="#cccccc"/>
<circle cx="2161.95" cy="821.73" r="4.1" fill="#cccccc"/>
<circle cx="2147.31" cy="812.04" r="4.1" fill="#cccccc"/>
<path d="M2226.5,811.6 H2250.8 M2238.6,799.6 V823.4" stroke="#cccccc" stroke-width="1.9" fill="none" />
<path d="M2261.5,810 L2268.5,817.2 L2275.5,810" stroke="#cccccc" stroke-width="1.7" fill="none" />
<rect x="2299.7" y="800.9" width="22.3" height="22" rx="2.6" stroke="#cccccc" stroke-width="2" fill="none"/>
<path d="M2310.8,800.9 V822.9" stroke="#cccccc" stroke-width="2" fill="none" />
<path d="M2345.4,805 H2366 M2351.5,805 V802.3 Q2351.5,800.8 2353,800.8 H2358.4 Q2359.9,800.8 2359.9,802.3 V805 M2347.8,805 L2348.8,821 Q2348.9,822.9 2350.8,822.9 H2360.6 Q2362.5,822.9 2362.6,821 L2363.6,805 M2352.4,809 V819 M2355.7,809 V819 M2359,809 V819" stroke="#cccccc" stroke-width="1.8" fill="none" />
<circle cx="2394.3" cy="812.4" r="2.0" fill="#cccccc"/>
<circle cx="2403.5" cy="812.4" r="2.0" fill="#cccccc"/>
<circle cx="2412.7" cy="812.4" r="2.0" fill="#cccccc"/>
<path d="M2438,798.6 V828" stroke="#5a5a5a" stroke-width="1.8" fill="none" />
<path d="M2462.7,812 V808.5 Q2462.7,806.6 2464.6,806.6 H2469 M2478,806.6 H2482.4 Q2484.3,806.6 2484.3,808.5 V812 M2484.3,817.6 V821 Q2484.3,822.9 2482.4,822.9 H2478 M2469,822.9 H2464.6 Q2462.7,822.9 2462.7,821 V817.6" stroke="#cccccc" stroke-width="1.9" fill="none" />
<path d="M2512.6,805 L2527.8,820.2 M2527.8,805 L2512.6,820.2" stroke="#cccccc" stroke-width="1.8" fill="none" />
<path d="M22.8,1504.7 L30.3,1511.4 L22.8,1518.1 M38.3,1497.9 L30.8,1504.6 L38.3,1511.3" stroke="#ffffff" stroke-width="1.9" fill="none" />
<circle cx="82.6" cy="1499.9" r="3.3" stroke="#cccccc" stroke-width="1.7" fill="none"/>
<circle cx="82.6" cy="1516.8" r="3.3" stroke="#cccccc" stroke-width="1.7" fill="none"/>
<circle cx="93.6" cy="1504.5" r="3.3" stroke="#cccccc" stroke-width="1.7" fill="none"/>
<path d="M82.6,1503.4 V1513.3 M93.6,1508 Q93.6,1511.6 89.5,1511.6 H86.5 Q82.6,1511.6 82.6,1513.3" stroke="#cccccc" stroke-width="1.7" fill="none" />
<path d="M177.83,1507.14 A8.4,8.4 0 0 1 194.21,1506.43" stroke="#cccccc" stroke-width="1.7" fill="none" />
<path d="M194.37,1510.06 A8.4,8.4 0 0 1 177.99,1510.77" stroke="#cccccc" stroke-width="1.7" fill="none" />
<path d="M190.4,1506.5 L194.4,1507.2 L197,1503.4 M181.8,1510.7 L177.8,1510 L175.2,1513.8" stroke="#cccccc" stroke-width="1.6" fill="none" />
<circle cx="239.8" cy="1508.6" r="10.1" stroke="#cccccc" stroke-width="1.7" fill="none"/>
<path d="M235.1,1503.9 L244.5,1513.3 M244.5,1503.9 L235.1,1513.3" stroke="#cccccc" stroke-width="1.7" fill="none" />
<path d="M289,1498.6 L298.8,1516.8 H279.2 Z" stroke="#cccccc" stroke-width="1.7" fill="none" stroke-linejoin="round"/>
<path d="M289,1505 V1512.2" stroke="#cccccc" stroke-width="1.8" fill="none" />
<circle cx="289" cy="1514.4" r="1.1" fill="#cccccc"/>
<circle cx="1803.9" cy="1506" r="8.1" stroke="#cccccc" stroke-width="2" fill="none"/>
<path d="M1799.9,1506 H1808.1 M1804,1502 V1510 M1809.9,1512.2 L1817.5,1519.2" stroke="#cccccc" stroke-width="2" fill="none" />
<ellipse cx="2378" cy="1513" rx="13.1" ry="6.9" fill="#cccccc"/>
<rect x="2367.4" y="1497" width="11.2" height="12.4" rx="4.6" fill="#cccccc"/><rect x="2377.6" y="1497" width="11.2" height="12.4" rx="4.6" fill="#cccccc"/>
<rect x="2370.4" y="1499.9" width="6.4" height="6.2" rx="2.6" fill="#181818"/><rect x="2379.9" y="1499.9" width="6.4" height="6.2" rx="2.6" fill="#181818"/>
<rect x="2370.6" y="1509.2" width="14.9" height="6.8" rx="3" fill="#181818"/>
<rect x="2374.7" y="1510.5" width="2.2" height="4.3" rx="1" fill="#cccccc"/><rect x="2379.6" y="1510.5" width="2.2" height="4.3" rx="1" fill="#cccccc"/>
<path d="M2513.2,1516.2 H2530.6 L2528.2,1511 V1505.6 Q2528.2,1498.2 2521.9,1498.2 Q2515.6,1498.2 2515.6,1505.6 V1511 Z" stroke="#cccccc" stroke-width="1.6" fill="none" stroke-linejoin="round"/>
<path d="M2519.5,1517 Q2521.9,1521 2524.3,1517" stroke="#cccccc" stroke-width="1.5" fill="none" />
</svg>
</body></html>
